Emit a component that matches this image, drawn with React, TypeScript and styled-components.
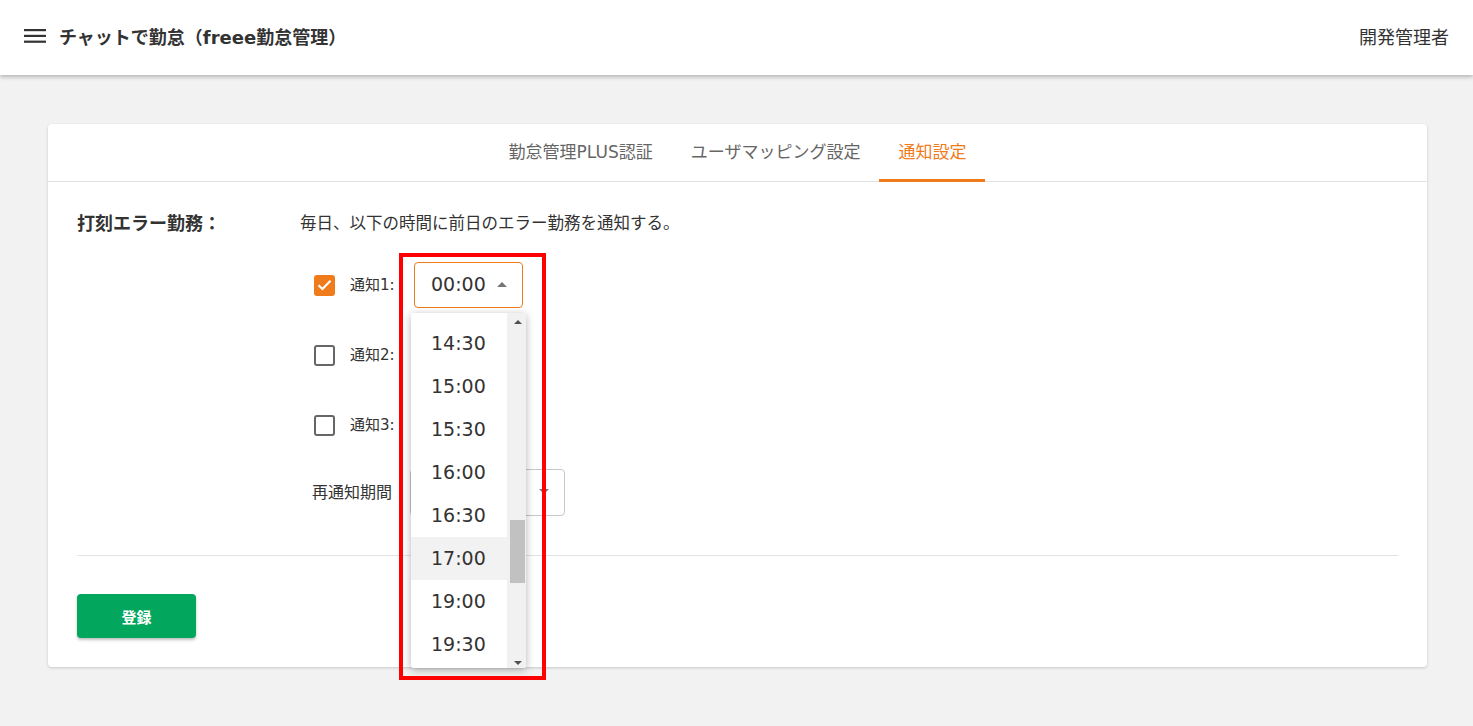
import React from "react";
import styled, { createGlobalStyle } from "styled-components";

const GlobalStyle = createGlobalStyle`
  html, body { margin: 0; padding: 0; }
  body {
    background: #f2f2f2;
    font-family: "DejaVu Sans", "Noto Sans CJK JP", sans-serif;
    color: #333;
  }
  * { box-sizing: border-box; }
`;

const Header = styled.header`
  height: 75px;
  background: #fff;
  display: flex;
  align-items: center;
  padding: 0 24px 4px;
  box-shadow: 0 2px 4px rgba(0, 0, 0, 0.25);
  position: relative;
  z-index: 2;
`;

const MenuButton = styled.div`
  width: 22px;
  height: 14px;
  display: flex;
  margin-right: 13px;
`;

const Title = styled.h1`
  margin: 0;
  font-size: 18px;
  font-weight: 700;
  color: #333;
  flex: 1;
  letter-spacing: 0;
`;

const UserName = styled.div`
  font-size: 18px;
  color: #333;
`;

const Main = styled.main`
  padding: 49px 46px 40px 48px;
`;

const Card = styled.section`
  background: #fff;
  border-radius: 4px;
  box-shadow: 0 1px 3px rgba(0, 0, 0, 0.18);
`;

const TabBar = styled.nav`
  height: 58px;
  display: flex;
  justify-content: center;
  border-bottom: 1px solid #e2e2e2;
`;

const Tab = styled.div<{ $active?: boolean }>`
  position: relative;
  display: flex;
  align-items: center;
  padding: 0 19px 4px;
  font-size: 17px;
  color: ${(p) => (p.$active ? "#f07b1b" : "#666")};
  &::after {
    content: "";
    display: ${(p) => (p.$active ? "block" : "none")};
    position: absolute;
    left: 0;
    right: 0;
    bottom: -1px;
    height: 3px;
    background: #f07b1b;
  }
`;

const Body = styled.div`
  padding: 30px 29px 29px;
`;

const Section = styled.div`
  display: grid;
  grid-template-columns: 223px 1fr;
`;

const SectionLabel = styled.div`
  font-size: 18px;
  font-weight: 700;
  line-height: 24px;
  color: #333;
`;

const Description = styled.div`
  font-size: 16.5px;
  line-height: 24px;
  color: #333;
`;

const Rows = styled.div`
  margin-top: 26px;
  padding-left: 14px;
  display: flex;
  flex-direction: column;
  gap: 24px;
`;

const Row = styled.div<{ $retry?: boolean }>`
  display: flex;
  align-items: center;
  height: ${(p) => (p.$retry ? "47px" : "46px")};
  margin-left: ${(p) => (p.$retry ? "-2px" : "0")};
  margin-top: ${(p) => (p.$retry ? "-3px" : "0")};
`;

const CheckBox = styled.div<{ $checked?: boolean }>`
  width: 21px;
  height: 21px;
  border-radius: 3px;
  flex: none;
  display: flex;
  align-items: center;
  justify-content: center;
  background: ${(p) => (p.$checked ? "#f07b1b" : "#fff")};
  border: ${(p) => (p.$checked ? "none" : "2px solid #666")};
  margin-right: 15px;
`;

const RowLabel = styled.div<{ $wide?: boolean }>`
  font-size: ${(p) => (p.$wide ? "16px" : "15px")};
  color: #333;
  width: ${(p) => (p.$wide ? "98px" : "64px")};
  white-space: nowrap;
  padding-bottom: 3px;
`;

const SelectWrap = styled.div<{ $open?: boolean }>`
  position: relative;
  z-index: ${(p) => (p.$open ? 10 : 1)};
`;

const SelectBox = styled.div<{ $focused?: boolean; $w: number }>`
  width: ${(p) => p.$w}px;
  height: ${(p) => (p.$focused ? "46px" : "47px")};
  border: ${(p) => (p.$focused ? "1.5px solid #f07b1b" : "1px solid #c8c8c8")};
  border-radius: 4px;
  display: flex;
  align-items: center;
  padding: 0 15px 2px 16px;
  font-size: 19px;
  color: #333;
  background: #fff;
`;

const SelectValue = styled.span`
  flex: 1;
`;

const Caret = styled.span<{ $up?: boolean }>`
  width: 0;
  height: 0;
  border-left: 5px solid transparent;
  border-right: 5px solid transparent;
  ${(p) =>
    p.$up ? "border-bottom: 5px solid #777;" : "border-top: 5px solid #777;"}
`;

const Dropdown = styled.div`
  position: absolute;
  top: 51px;
  left: -3px;
  width: 115px;
  height: 355px;
  background: #fff;
  border-radius: 2px;
  box-shadow: 0 2px 8px rgba(0, 0, 0, 0.3);
  display: flex;
  overflow: hidden;
`;

const OptionList = styled.div`
  flex: 1;
  padding-top: 9px;
  overflow: hidden;
`;

const Option = styled.div<{ $hover?: boolean }>`
  height: 43px;
  display: flex;
  align-items: center;
  padding: 0 0 2px 20px;
  font-size: 19px;
  color: #333;
  background: ${(p) => (p.$hover ? "#f2f2f2" : "transparent")};
`;

const ScrollTrack = styled.div`
  width: 19px;
  background: #f1f1f1;
  display: flex;
  flex-direction: column;
  align-items: center;
  padding: 4px 0 0 2px;
`;

const ScrollArrow = styled.div<{ $down?: boolean }>`
  width: 0;
  height: 0;
  border-left: 4px solid transparent;
  border-right: 4px solid transparent;
  ${(p) =>
    p.$down ? "border-top: 4px solid #505050;" : "border-bottom: 4px solid #505050;"}
  margin: 3px 0;
`;

const ScrollSpace = styled.div`
  flex: 1;
  width: 15px;
  display: flex;
  flex-direction: column;
  padding-top: 193px;
`;

const ScrollThumb = styled.div`
  width: 15px;
  height: 63px;
  background: #c1c1c1;
`;

const Annotation = styled.div`
  position: absolute;
  top: -9px;
  left: -15px;
  width: 147px;
  height: 427px;
  border: 4px solid #ff0000;
  pointer-events: none;
  z-index: 20;
`;

const Divider = styled.hr`
  margin: 39px 0 0;
  border: none;
  border-top: 1px solid #e2e2e2;
`;

const SubmitButton = styled.button`
  margin-top: 38px;
  width: 119px;
  height: 44px;
  border: none;
  border-radius: 4px;
  background: #03a65d;
  color: #fff;
  font-family: "Noto Sans CJK JP", sans-serif;
  font-weight: 700;
  font-size: 15px;
  box-shadow: 0 2px 3px rgba(0, 0, 0, 0.25);
`;

const options = ["14:30", "15:00", "15:30", "16:00", "16:30", "17:00", "19:00", "19:30"];

export default function App() {
  return (
    <>
      <GlobalStyle />
      <Header>
        <MenuButton>
          <svg width="22" height="14" viewBox="0 0 22 14">
            <rect x="0" y="0" width="22" height="2.2" fill="#333" />
            <rect x="0" y="5.8" width="22" height="2.2" fill="#333" />
            <rect x="0" y="11.6" width="22" height="2.2" fill="#333" />
          </svg>
        </MenuButton>
        <Title>チャットで勤怠（freee勤怠管理）</Title>
        <UserName>開発管理者</UserName>
      </Header>
      <Main>
        <Card>
          <TabBar>
            <Tab>勤怠管理PLUS認証</Tab>
            <Tab>ユーザマッピング設定</Tab>
            <Tab $active>通知設定</Tab>
          </TabBar>
          <Body>
            <Section>
              <SectionLabel>打刻エラー勤務：</SectionLabel>
              <div>
                <Description>毎日、以下の時間に前日のエラー勤務を通知する。</Description>
                <Rows>
                  <Row>
                    <CheckBox $checked>
                      <svg width="15" height="12" viewBox="0 0 15 12">
                        <path d="M1.5 6.2 L5.5 10 L13.5 1.8" fill="none" stroke="#fff" strokeWidth="2.2" />
                      </svg>
                    </CheckBox>
                    <RowLabel>通知1:</RowLabel>
                    <SelectWrap $open>
                      <SelectBox $focused $w={109}>
                        <SelectValue>00:00</SelectValue>
                        <Caret $up />
                      </SelectBox>
                      <Dropdown>
                        <OptionList>
                          {options.map((o) => (
                            <Option key={o} $hover={o === "17:00"}>
                              {o}
                            </Option>
                          ))}
                        </OptionList>
                        <ScrollTrack>
                          <ScrollArrow />
                          <ScrollSpace>
                            <ScrollThumb />
                          </ScrollSpace>
                          <ScrollArrow $down />
                        </ScrollTrack>
                      </Dropdown>
                      <Annotation />
                    </SelectWrap>
                  </Row>
                  <Row>
                    <CheckBox />
                    <RowLabel>通知2:</RowLabel>
                    <SelectWrap>
                      <SelectBox $w={109}>
                        <SelectValue />
                        <Caret />
                      </SelectBox>
                    </SelectWrap>
                  </Row>
                  <Row>
                    <CheckBox />
                    <RowLabel>通知3:</RowLabel>
                    <SelectWrap>
                      <SelectBox $w={109}>
                        <SelectValue />
                        <Caret />
                      </SelectBox>
                    </SelectWrap>
                  </Row>
                  <Row $retry>
                    <RowLabel $wide>再通知期間</RowLabel>
                    <SelectWrap>
                      <SelectBox $w={155}>
                        <SelectValue />
                        <Caret />
                      </SelectBox>
                    </SelectWrap>
                  </Row>
                </Rows>
              </div>
            </Section>
            <Divider />
            <SubmitButton>登録</SubmitButton>
          </Body>
        </Card>
      </Main>
    </>
  );
}
